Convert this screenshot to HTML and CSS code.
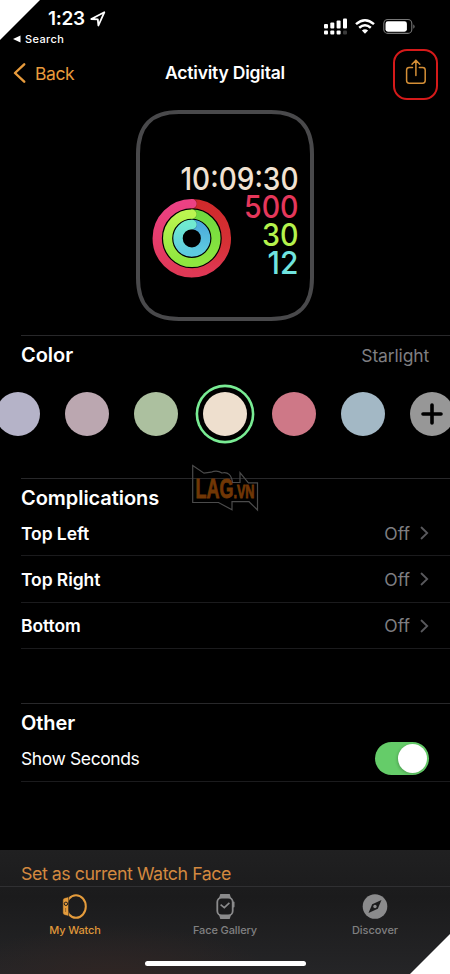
FILE: index.html
```html
<!DOCTYPE html>
<html lang="en">
<head>
<meta charset="utf-8">
<title>Activity Digital</title>
<link rel="stylesheet" href="styles.css">
</head>
<body>
<div class="phone">
  <header class="status">
    <div class="status-left">
      <div class="clock"><span>1:23</span>
        <svg width="16" height="16" viewBox="0 0 16 16"><path d="M1.3 8 14.3 1.3 8.4 14.5 7.8 8.4Z" fill="none" stroke="#fff" stroke-width="1.8" stroke-linejoin="round"/></svg>
      </div>
      <div class="return"><svg width="8" height="8" viewBox="0 0 8 8"><path d="M0 4 7.5.6V7.4Z" fill="#fff"/></svg><span>Search</span></div>
    </div>
    <svg class="status-icons" width="94" height="18" viewBox="0 0 94 18">
      <g fill="#fff">
        <rect x="1" y="6" width="4" height="4.5" rx="1"/><rect x="7.3" y="4.5" width="4" height="6" rx="1"/><rect x="13.6" y="2.5" width="4" height="8" rx="1"/><rect x="20" y=".5" width="4" height="10" rx="1"/>
        <rect x="1" y="12.5" width="4" height="4" rx="1"/><rect x="7.3" y="12.5" width="4" height="4" rx="1"/><rect x="13.6" y="12.5" width="4" height="4" rx="1"/><rect x="20" y="12.5" width="4" height="4" rx="1" fill="#3a3a3a"/>
        <path d="M38.9 12.4Q42 10.3 45.1 12.4L42 15.7Z"/>
      </g>
      <path d="M33 6.1Q42-1.7 51 6.1M36.2 9.7Q42 4.7 47.8 9.7" fill="none" stroke="#fff" stroke-width="2.5"/>
      <rect x="60.8" y="1.5" width="28" height="13.9" rx="4" fill="none" stroke="#777" stroke-width="1.1"/>
      <rect x="62.5" y="3.3" width="21.4" height="10.4" rx="2.4" fill="#fff"/>
      <path d="M90.3 6.2Q93 8.5 90.3 10.8Z" fill="#777"/>
    </svg>
  </header>

  <nav class="navbar">
    <a class="back"><svg width="13" height="20" viewBox="0 0 13 20"><path d="M11.2 1.3 2 10 11.2 18.7" fill="none" stroke="#e89b3c" stroke-width="2.4" stroke-linecap="round" stroke-linejoin="round"/></svg><span>Back</span></a>
    <h1>Activity Digital</h1>
    <a class="share"><svg width="22" height="28" viewBox="0 0 22 28"><path d="M7.5 9.4H4.2Q1.6 9.4 1.6 12V22.6Q1.6 25.2 4.2 25.2H17.6Q20.2 25.2 20.2 22.6V12Q20.2 9.4 17.6 9.4H14.3M10.9 17.5V2.3M7 6.3 10.9 2.3 14.8 6.3" fill="none" stroke="#d58f36" stroke-width="1.5" stroke-linecap="round" stroke-linejoin="round"/></svg></a>
  </nav>

  <div class="preview">
    <svg width="180" height="212" viewBox="0 0 180 212">
      <defs>
        <linearGradient id="move-a" x1="0" y1="0" x2="0" y2="1"><stop offset="0" stop-color="#cf2a2c"/><stop offset=".6" stop-color="#d63136"/><stop offset="1" stop-color="#df3855"/></linearGradient>
        <linearGradient id="move-b" x1="0" y1="0" x2="0" y2="1"><stop offset="0" stop-color="#ec4184"/><stop offset="1" stop-color="#df3855"/></linearGradient>
        <linearGradient id="exercise-a" x1="0" y1="0" x2="0" y2="1"><stop offset="0" stop-color="#70d93f"/><stop offset="1" stop-color="#8ee63f"/></linearGradient>
        <linearGradient id="exercise-b" x1="0" y1="0" x2="0" y2="1"><stop offset="0" stop-color="#bcf550"/><stop offset="1" stop-color="#8ee63f"/></linearGradient>
        <linearGradient id="stand-a" x1="0" y1="0" x2="0" y2="1"><stop offset="0" stop-color="#4cabdc"/><stop offset="1" stop-color="#5ecbe0"/></linearGradient>
        <linearGradient id="stand-b" x1="0" y1="0" x2="0" y2="1"><stop offset="0" stop-color="#70ead0"/><stop offset="1" stop-color="#5ecbe0"/></linearGradient>
      </defs>
      <path d="M44 2H136C164 2 177 16 177 44V168C177 196 164 209 136 209H44C16 209 3 196 3 168V44C3 16 16 2 44 2Z" fill="#000" stroke="#49494b" stroke-width="4"/>
      <g fill="none">
        <path d="M56.8 93.7a34.6 34.6 0 0 1 0 69.2" stroke="url(#move-a)" stroke-width="9.3"/>
        <path d="M57 93.7h-.2a34.6 34.6 0 0 0 0 69.2h.2" stroke="url(#move-b)" stroke-width="9.3"/>
        <path d="M56.8 104.1a24.2 24.2 0 0 1 0 48.4" stroke="url(#exercise-a)" stroke-width="9.1"/>
        <path d="M57 104.1h-.2a24.2 24.2 0 0 0 0 48.4h.2" stroke="url(#exercise-b)" stroke-width="9.1"/>
        <path d="M56.8 114.5a13.8 13.8 0 0 1 0 27.6" stroke="url(#stand-a)" stroke-width="9.4"/>
        <path d="M57 114.5h-.2a13.8 13.8 0 0 0 0 27.6h.2" stroke="url(#stand-b)" stroke-width="9.4"/>
        <path d="M57.6 89.3a4.6 4.6 0 0 1 0 9M57.6 99.8a4.5 4.5 0 0 1 0 8.7M57.6 110a4.6 4.6 0 0 1 0 9" stroke="#000" stroke-opacity=".25" stroke-width="1.6"/>
      </g>
      <path d="M56.5 89.05h.5a4.6 4.6 0 0 1 0 9.3h-.5Z" fill="#ec4184"/>
      <path d="M56.5 99.55h.5a4.5 4.5 0 0 1 0 9.1h-.5Z" fill="#bcf550"/>
      <path d="M56.5 109.8h.5a4.6 4.6 0 0 1 0 9.4h-.5Z" fill="#70ead0"/>
      <g class="face">
        <text x="45.5" y="80" textLength="118" lengthAdjust="spacingAndGlyphs" fill="#f1e2d2">10:09:30</text>
        <text x="109" y="107.6" textLength="54.5" lengthAdjust="spacingAndGlyphs" fill="#e5375b">500</text>
        <text x="127" y="135.6" textLength="36.5" lengthAdjust="spacingAndGlyphs" fill="#b5f34c">30</text>
        <text x="132.5" y="163.6" textLength="30.8" lengthAdjust="spacingAndGlyphs" fill="#70e4df">12</text>
      </g>
    </svg>
  </div>

  <main>
    <section class="color">
      <div class="section-head"><h2>Color</h2><span class="value starlight">Starlight</span></div>
      <div class="swatches">
        <i class="swatch lavender"></i><i class="swatch mauve"></i><i class="swatch sage"></i><i class="swatch cream selected"></i><i class="swatch rose"></i><i class="swatch blue"></i>
        <i class="swatch add"><svg width="22" height="22" viewBox="0 0 22 22"><path d="M11 2V20M2 11H20" stroke="#000" stroke-width="3.6" stroke-linecap="round"/></svg></i>
      </div>
    </section>
    <section class="complications">
      <h2>Complications</h2>
      <div class="row"><b>Top Left</b><span class="value">Off</span><svg width="9" height="14" viewBox="0 0 9 14"><path d="M1.5 1.5 7.2 7 1.5 12.5" fill="none" stroke="#59595d" stroke-width="1.8" stroke-linecap="round"/></svg></div>
      <div class="row"><b>Top Right</b><span class="value">Off</span><svg width="9" height="14" viewBox="0 0 9 14"><path d="M1.5 1.5 7.2 7 1.5 12.5" fill="none" stroke="#59595d" stroke-width="1.8" stroke-linecap="round"/></svg></div>
      <div class="row"><b>Bottom</b><span class="value">Off</span><svg width="9" height="14" viewBox="0 0 9 14"><path d="M1.5 1.5 7.2 7 1.5 12.5" fill="none" stroke="#59595d" stroke-width="1.8" stroke-linecap="round"/></svg></div>
      <svg class="watermark" width="68" height="48" viewBox="0 0 68 48">
        <path d="M1.7 1.6 13 9.2 20 8.2Q26 5.5 31 9Q40 7 41.5 18.5L49 18.3V8.7L57.4 18.8H66.5V46L58 37.7H41V45.8L27.5 38.5H1.7Z" fill="none" stroke="#4b4b4b" stroke-width="1.2"/>
        <text class="logo" x="4.5" y="34" textLength="59" lengthAdjust="spacingAndGlyphs"><tspan font-size="27">LAG</tspan><tspan font-size="19">.VN</tspan></text>
      </svg>
    </section>
    <section class="other">
      <h2>Other</h2>
      <div class="row toggle-row"><span class="toggle-label">Show Seconds</span><span class="toggle"><i></i></span></div>
    </section>
  </main>

  <footer>
    <div class="set-face"><span>Set as current Watch Face</span></div>
    <div class="tabs">
      <a class="tab active">
        <svg width="26" height="28" viewBox="0 0 26 28"><ellipse cx="14" cy="13.5" rx="9.8" ry="11.3" fill="none" stroke="#e59c3c" stroke-width="2"/><path d="M.8 7Q.8 5.3 2.6 4.9L6.6 3.8V23.2L2.6 22.1Q.8 21.7.8 20Z" fill="#e59c3c" stroke="#1c1c1d" stroke-width=".6"/><circle cx="3.9" cy="10.8" r="1.7" fill="none" stroke="#1c1c1d"/><path d="M3.6 15v4" stroke="#8a6029" stroke-width=".8"/></svg>
        <span>My Watch</span></a>
      <a class="tab gallery">
        <svg width="26" height="28" viewBox="0 0 26 28"><path d="M7 5 8.3 1H17.7L19 5ZM7 22 8.3 26H17.7L19 22Z" fill="#8b8b8c"/><rect x="5.3" y="4.5" width="15.4" height="18" rx="4.5" fill="#1b1b1c" stroke="#8b8b8c" stroke-width="1.8"/><path d="M21.6 9.5v4" stroke="#8b8b8c" stroke-width="1.8" stroke-linecap="round"/><path d="M8.6 11.6 12.3 14.7 17.4 9.8" fill="none" stroke="#8b8b8c" stroke-width="1.6"/></svg>
        <span>Face Gallery</span></a>
      <a class="tab discover">
        <svg width="26" height="28" viewBox="0 0 26 28"><circle cx="13" cy="13.5" r="12.3" fill="#8b8b8c"/><path d="M19.5 7 15.8 15.8 6.5 20 10.2 11.2Z" fill="#1c1c1d"/><circle cx="13" cy="13.5" r="1.7" fill="#8b8b8c"/></svg>
        <span>Discover</span></a>
    </div>
    <div class="home"></div>
  </footer>
  <i class="corner top"></i><i class="corner bottom"></i>
</div>
</body>
</html>
```
FILE: styles.css
```css
* { box-sizing: border-box; }
body { margin: 0; background: #000; color: #fff; font-family: Inter, "Liberation Sans", sans-serif; }
svg { display: block; flex: none; }
h1, h2 { margin: 0; font-weight: 600; }
.phone { position: relative; width: 450px; height: 974px; overflow: hidden; display: flex; flex-direction: column; }
.status { height: 49px; display: flex; justify-content: space-between; padding: 9px 33px 0 13px; }
.clock { display: flex; align-items: center; gap: 5px; padding-left: 35px; height: 20px; font-size: 19px; font-weight: 600; line-height: 20px; letter-spacing: -.35px; }
.return { display: flex; align-items: center; gap: 4px; height: 20px; font-size: 11px; font-weight: 500; letter-spacing: .4px; }
.status-icons { margin-top: 9px; }
.navbar { height: 51px; display: grid; grid-template-columns: 1fr auto 1fr; align-items: center; padding: 0 12px 0 13px; }
.navbar h1 { font-size: 17.5px; line-height: 22px; letter-spacing: -.2px; padding-bottom: 3px; position: relative; left: -.5px; }
.back { display: flex; align-items: center; gap: 9px; color: #e89b3c; font-size: 17.5px; letter-spacing: -.4px; padding-bottom: 3px; }
.share { justify-self: end; display: flex; align-items: center; justify-content: center; width: 45px; height: 51px; border: 2px solid #d51a1a; border-radius: 14px; padding-bottom: 5px; }
.preview { height: 235px; display: flex; justify-content: center; padding-top: 10px; }
.face { font-size: 31px; font-weight: 500; }
main { padding-left: 21px; height: 515px; }
section { position: relative; border-top: 1px solid #28282a; }
h2 { font-size: 20px; line-height: 24px; letter-spacing: -.05px; }
.value { color: #7f7f82; font-size: 17.5px; }
.starlight { letter-spacing: -.15px; }
.color { height: 143px; padding-top: 7px; }
.section-head { display: flex; justify-content: space-between; align-items: center; padding-right: 21px; }
.swatches { display: flex; gap: 25px; width: 459px; margin: 24.5px 0 0 -25px; }
.swatch { width: 44px; height: 44px; flex: none; border-radius: 50%; }
.lavender { background: #b5b3c8; }
.mauve { background: #bba7b0; }
.sage { background: #acc09f; }
.cream { background: #eedfce; }
.rose { background: #ce7887; }
.blue { background: #a3b8c5; }
.add { background: #979797; display: flex; align-items: center; justify-content: center; }
.selected { box-shadow: 0 0 0 4.8px #000, 0 0 0 7.4px #79ec94; }
.complications { height: 225px; padding-top: 7px; }
.row { display: flex; align-items: center; height: 46.3px; padding: 1px 21px 0 0; border-bottom: 1px solid #1b1b1d; }
.row b { flex: 1; font-size: 17.5px; font-weight: 600; letter-spacing: -.08px; }
.row .value { margin-right: 10px; }
.watermark { position: absolute; left: 170px; top: -15px; }
.logo { font-family: "Liberation Sans", sans-serif; font-weight: 700; fill: #713705; stroke: #713705; stroke-width: .9px; }
.other { height: 147px; padding-top: 7px; }
.toggle-row { height: 47px; padding-top: 0; }
.toggle-label { flex: 1; font-size: 17.5px; letter-spacing: -.4px; }
.toggle { width: 54px; height: 33px; padding: 2px; border-radius: 17px; background: #65cc69; display: flex; justify-content: flex-end; }
.toggle i { width: 29px; height: 29px; border-radius: 50%; background: #fff; box-shadow: -1px 1px 3px #0003; }
footer { height: 124px; background: radial-gradient(ellipse 160px 55px at 115px 130px, #302523, transparent), linear-gradient(#202021, #1b1b1c 38%, #252527); }
.set-face { height: 37px; border-bottom: 1px solid #303032; padding: 12px 21px 0; font-size: 17.8px; line-height: 24px; letter-spacing: -.45px; color: #d3893f; }
.tabs { display: grid; grid-template-columns: repeat(3, 1fr); height: 73px; padding-top: 6px; }
.tab { display: flex; flex-direction: column; align-items: center; gap: 2px; font-size: 11px; font-weight: 500; line-height: 14px; color: #808081; letter-spacing: -.12px; }
.active { color: #df963a; }
.discover { letter-spacing: 0; }
.home { width: 161px; height: 5px; margin: 1px auto 0; border-radius: 3px; background: #fff; }
.corner { position: absolute; width: 40px; height: 40px; background: #fff; }
.top { left: 0; top: 0; clip-path: polygon(0 0, 100% 0, 0 100%); }
.bottom { right: 0; bottom: 0; clip-path: polygon(100% 0, 100% 100%, 0 100%); }
```
